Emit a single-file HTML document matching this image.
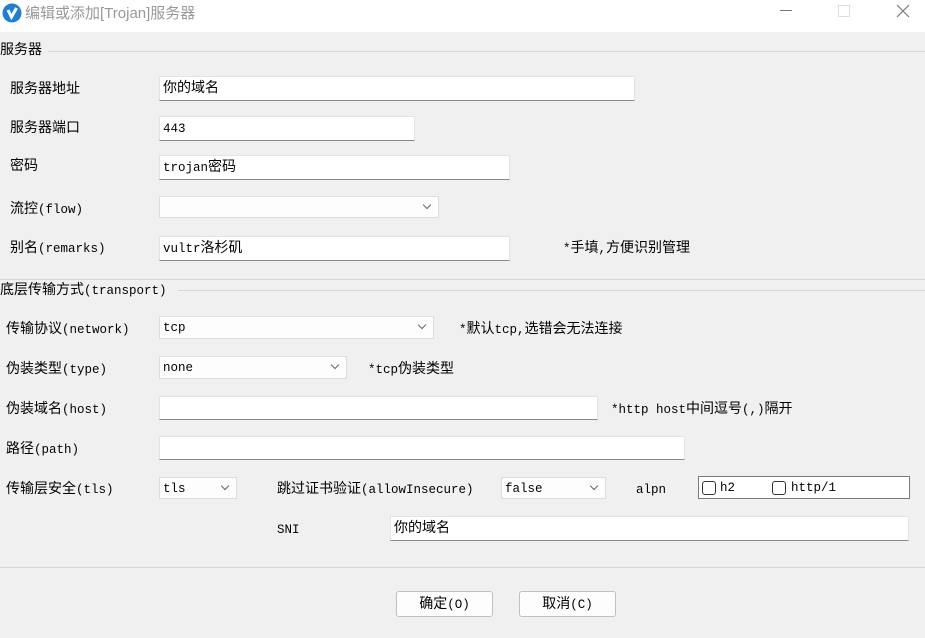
<!DOCTYPE html>
<html><head><meta charset="utf-8"><style>
*{margin:0;padding:0;box-sizing:border-box}
body{width:925px;height:638px;background:#f0f0f0;position:relative;overflow:hidden;font-family:"Liberation Mono","Noto Sans CJK SC",monospace;font-size:14px;color:#000}
.a{position:absolute;white-space:nowrap;line-height:16px;margin-top:2px}
i{font-style:normal;font-size:12.5px}
.in{position:absolute;background:#fff;border:1px solid #e3e3e3;border-bottom:1px solid #8a8a8a;padding-left:3px;line-height:22px;font-size:14px;padding-top:1px}
.cb{position:absolute;background:#fdfdfd;border:1px solid #dcdcdc;padding-left:3px;line-height:20px;padding-top:1px}
.cb:after{content:"";position:absolute;right:8px;top:5px;width:5px;height:5px;border-right:1px solid #666;border-bottom:1px solid #666;transform:rotate(45deg)}
.ln{position:absolute;height:1px;background:#d8d8d8}
.btn{position:absolute;border:1px solid #c0c0c0;border-radius:3px;background:#fdfdfd;text-align:center;line-height:24px;padding-top:1px}
.ck{position:absolute;width:14px;height:14px;border:1px solid #333;border-radius:3px;background:#fff}
</style></head><body>
<div style="position:absolute;left:0;top:0;width:925px;height:32px;background:#fff"></div>
<svg style="position:absolute;left:2px;top:3px" width="20" height="20"><circle cx="10" cy="10" r="9.5" fill="#1e7fd8"/><path d="M6 7 L9.5 14 L14.5 5" stroke="#fff" stroke-width="3" fill="none"/></svg>
<div class="a" style="left:25px;top:4px;color:#999;font-family:'Liberation Sans','Noto Sans CJK SC',sans-serif;font-size:15px">编辑或添加[Trojan]服务器</div>
<div class="ln" style="left:780px;top:10px;width:12px;background:#777"></div>
<div style="position:absolute;left:838px;top:5px;width:12px;height:12px;border:1px solid #ddd"></div>
<svg style="position:absolute;left:896px;top:4px" width="14" height="14"><path d="M1 1L13 13M13 1L1 13" stroke="#777" stroke-width="1.2"/></svg>

<div class="a" style="left:0;top:41px">服务器</div>
<div class="ln" style="left:48px;top:51px;width:877px"></div>
<div class="a" style="left:10px;top:80px">服务器地址</div>
<div class="in" style="left:159px;top:76px;width:476px;height:25px">你的域名</div>
<div class="a" style="left:10px;top:119px">服务器端口</div>
<div class="in" style="left:159px;top:116px;width:256px;height:25px"><i>443</i></div>
<div class="a" style="left:10px;top:157px">密码</div>
<div class="in" style="left:159px;top:155px;width:351px;height:25px"><i>trojan</i>密码</div>
<div class="a" style="left:10px;top:200px">流控<i>(flow)</i></div>
<div class="cb" style="left:159px;top:196px;width:280px;height:22px"></div>
<div class="a" style="left:10px;top:239px">别名<i>(remarks)</i></div>
<div class="in" style="left:159px;top:236px;width:351px;height:25px"><i>vultr</i>洛杉矶</div>
<div class="a" style="left:563px;top:239px"><i>*</i>手填<i>,</i>方便识别管理</div>

<div class="ln" style="left:0;top:279px;width:925px"></div>
<div class="a" style="left:0;top:281px">底层传输方式<i>(transport)</i></div>
<div class="ln" style="left:178px;top:290px;width:747px"></div>
<div class="a" style="left:6px;top:320px">传输协议<i>(network)</i></div>
<div class="cb" style="left:159px;top:316px;width:275px;height:23px"><i>tcp</i></div>
<div class="a" style="left:459px;top:320px"><i>*</i>默认<i>tcp,</i>选错会无法连接</div>
<div class="a" style="left:6px;top:360px">伪装类型<i>(type)</i></div>
<div class="cb" style="left:159px;top:356px;width:188px;height:23px"><i>none</i></div>
<div class="a" style="left:368px;top:360px"><i>*tcp</i>伪装类型</div>
<div class="a" style="left:6px;top:400px">伪装域名<i>(host)</i></div>
<div class="in" style="left:159px;top:396px;width:439px;height:24px"></div>
<div class="a" style="left:611px;top:400px"><i>*http host</i>中间逗号<i>(,)</i>隔开</div>
<div class="a" style="left:6px;top:440px">路径<i>(path)</i></div>
<div class="in" style="left:159px;top:436px;width:526px;height:24px"></div>
<div class="a" style="left:6px;top:480px">传输层安全<i>(tls)</i></div>
<div class="cb" style="left:159px;top:477px;width:78px;height:22px"><i>tls</i></div>
<div class="a" style="left:277px;top:480px">跳过证书验证<i>(allowInsecure)</i></div>
<div class="cb" style="left:501px;top:477px;width:105px;height:22px"><i>false</i></div>
<div class="a" style="left:636px;top:480px"><i>alpn</i></div>
<div style="position:absolute;left:698px;top:476px;width:212px;height:23px;border:1px solid #7a7a7a;background:#fff"></div>
<div class="ck" style="left:702px;top:481px"></div>
<div class="a" style="left:720px;top:478px"><i>h2</i></div>
<div class="ck" style="left:772px;top:481px"></div>
<div class="a" style="left:791px;top:478px"><i>http/1</i></div>
<div class="a" style="left:277px;top:520px"><i>SNI</i></div>
<div class="in" style="left:390px;top:516px;width:519px;height:25px">你的域名</div>

<div class="ln" style="left:0;top:567px;width:925px"></div>
<div class="btn" style="left:396px;top:591px;width:97px;height:26px">确定<i>(O)</i></div>
<div class="btn" style="left:519px;top:591px;width:97px;height:26px">取消<i>(C)</i></div>
</body></html>
